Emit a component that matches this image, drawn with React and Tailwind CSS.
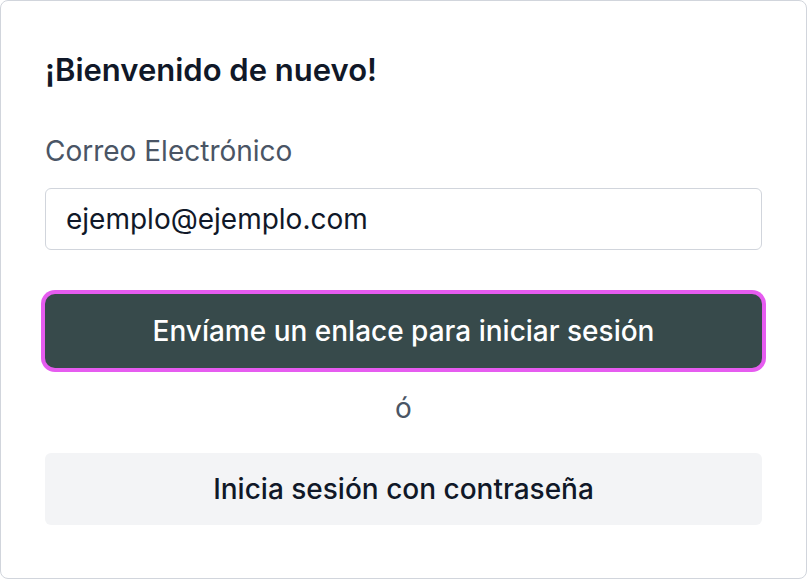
export default function App() {
  return (
    <div className="w-[808px] h-[580px] bg-white" style={{ fontFamily: 'Inter, "Noto Sans", sans-serif' }}>
      <div className="w-[807px] h-[579px] border border-gray-300 rounded-lg px-[44px] pt-[48px] flex flex-col">
        <h1 className="text-[31px] leading-[42px] font-semibold text-gray-900">¡Bienvenido de nuevo!</h1>

        <label className="mt-[39px] text-[28px] leading-[42px] text-gray-600">Correo Electrónico</label>
        <input
          type="email"
          defaultValue="ejemplo@ejemplo.com"
          className="mt-[16px] h-[62px] w-full rounded-md border border-gray-300 px-[20px] text-[28px] text-gray-900 outline-none"
        />

        <button className="mt-[44px] h-[74px] w-full rounded-[10px] bg-[#374a4b] text-[28px] font-medium text-white shadow-[0_0_0_4px_#e65cf0]">
          Envíame un enlace para iniciar sesión
        </button>

        <div className="mt-[19px] text-center text-[28px] leading-[42px] text-gray-600">ó</div>

        <button className="mt-[24px] h-[72px] w-full rounded-md bg-gray-100 text-[28px] font-medium text-gray-900">
          Inicia sesión con contraseña
        </button>
      </div>
    </div>
  );
}
